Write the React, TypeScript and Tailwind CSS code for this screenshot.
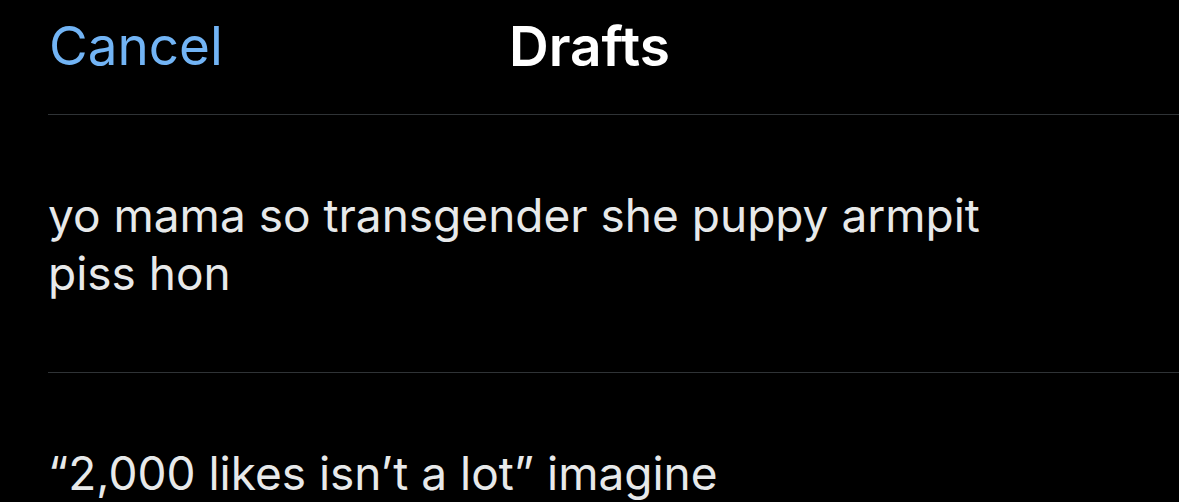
const drafts = [
  "yo mama so transgender she puppy armpit piss hon",
  "\u201c2,000 likes isn\u2019t a lot\u201d imagine",
];

export default function App() {
  return (
    <div
      className="h-screen w-full overflow-hidden bg-black"
      style={{ fontFamily: "Inter, 'Liberation Sans', sans-serif" }}
    >
      <div className="relative flex h-[114px] items-start justify-center pt-[19px]">
        <button className="absolute left-[49px] top-[20px] text-[53px] leading-none text-[#72b4f5]">
          Cancel
        </button>
        <h1 className="text-[55px] font-semibold leading-none text-white">Drafts</h1>
      </div>

      {drafts.map((text, i) => (
        <div key={i} className="ml-[48px] border-t border-[#2f3336]">
          <p className="max-w-[940px] pb-[70px] pt-[71px] text-[46px] leading-[58px] text-[#e7e9ea]">
            {text}
          </p>
        </div>
      ))}
    </div>
  );
}
